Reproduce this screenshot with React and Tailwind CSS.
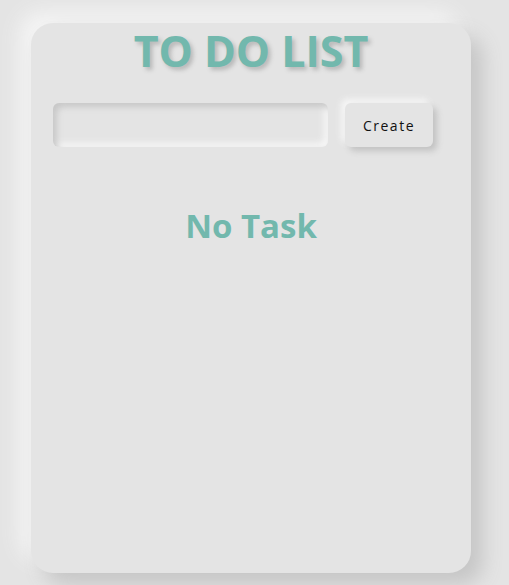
export default function App() {
  return (
    <div className="min-h-[585px] w-full bg-[#e4e4e4] pt-[23px] pl-[31px]" style={{ fontFamily: '"Open Sans", "Noto Sans", sans-serif' }}>
      <div className="flex h-[550px] w-[440px] flex-col items-center rounded-[22px] bg-[#e4e4e4] shadow-[12px_12px_20px_#c6c6c6,-12px_-12px_20px_#f4f4f4]">
        <h1 className="mt-[3px] text-[43px] font-bold leading-[50px] text-[#72b8ad] [text-shadow:3px_3px_4px_#b8b8b8]">TO DO LIST</h1>
        <div className="mt-[27px] flex w-full items-center pl-[22px]">
          <input className="h-[44px] w-[275px] rounded-[6px] bg-[#e4e4e4] outline-none shadow-[inset_4px_4px_6px_#c8c8c8,inset_-4px_-4px_6px_#f6f6f6]" />
          <button className="ml-[17px] h-[44px] w-[88px] rounded-[6px] bg-[#e4e4e4] text-[14px] tracking-[1.5px] text-[#111] shadow-[4px_4px_6px_#c2c2c2,-4px_-4px_6px_#f6f6f6]">Create</button>
        </div>
        <p className="mt-[59px] text-[33px] font-bold leading-[40px] text-[#72b8ad]">No Task</p>
      </div>
    </div>
  );
}
